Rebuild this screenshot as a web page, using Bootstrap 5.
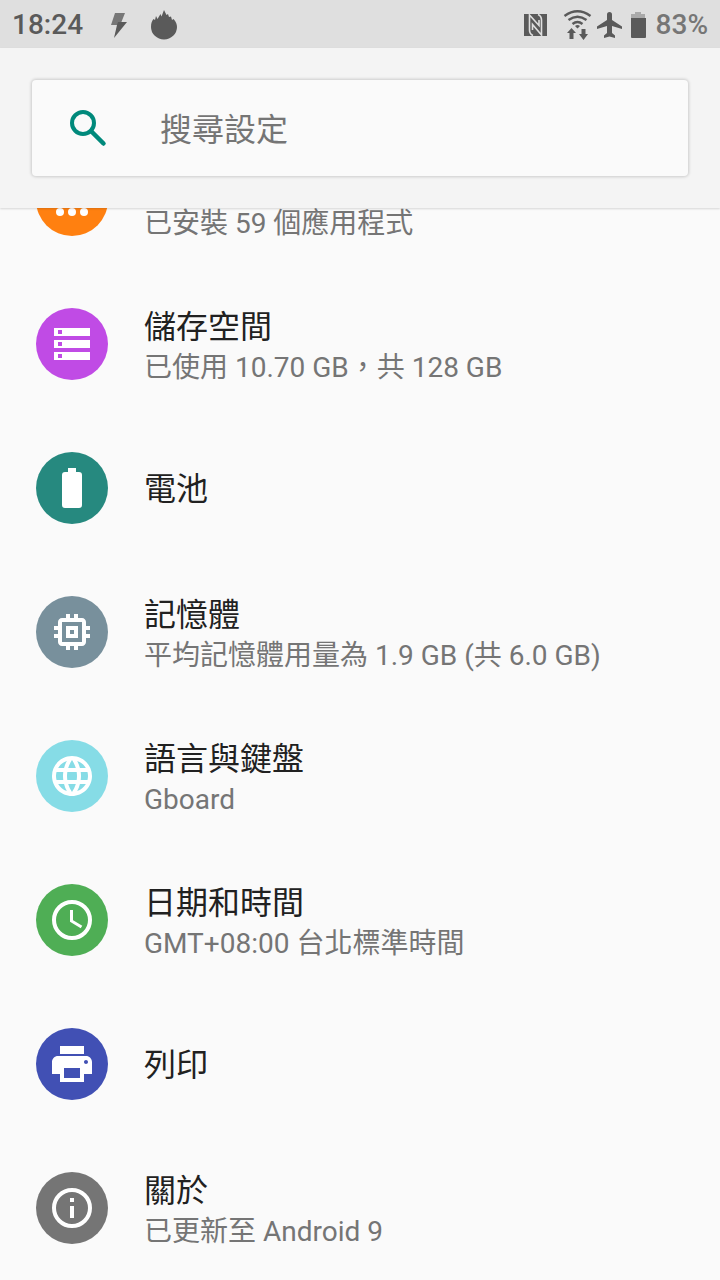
<!DOCTYPE html>
<html lang="zh-Hant">
<head>
<meta charset="utf-8">
<meta name="viewport" content="width=device-width, initial-scale=1">
<title>設定</title>
<link href="https://cdn.jsdelivr.net/npm/bootstrap@5.3.0/dist/css/bootstrap.min.css" rel="stylesheet">
<style>
  body { font-family: Roboto, "Noto Sans CJK TC", sans-serif; background: #fafafa; color: #212121; }
  svg { display: block; flex: none; }
  .status-bar { height: 48px; background: #dfdfdf; color: #5a5a5a; font-size: 28px; line-height: 48px; font-weight: 500; padding: 2px 12px 0; }
  .status-bar .level { color: #767676; }
  .status-icons { gap: 4px; margin-right: 9px; }
  .search-area { background: #f4f4f4; padding: 32px; box-shadow: 0 1px 2px rgba(0,0,0,.15); }
  .search-box { height: 96px; padding: 0 36px; background: #fafafa; border-radius: 4px; box-shadow: 0 0 3px 1px rgba(0,0,0,.17); }
  .search-box .form-control { font-size: 32px; line-height: 44px; color: #212121; padding: 4px 0 0; margin-left: 52px; }
  .search-box .form-control::placeholder { color: #757575; opacity: 1; }
  .setting { height: 144px; padding: 0 36px; gap: 36px; color: #212121; }
  .setting-text { padding-top: 2px; }
  .setting-title { font-size: 32px; line-height: 44px; padding-top: 2px; }
  .setting-note { font-size: 28px; line-height: 38px; color: #757575; }
  .setting-cut { height: 64px; padding-bottom: 33px; overflow: hidden; }
  .setting-cut svg { margin-bottom: 3px; }
  .setting-cut .setting-note { line-height: 30px; }
</style>
</head>
<body>
<header class="sticky-top">
  <div class="status-bar d-flex align-items-center">
    <span>18:24</span>
    <svg class="ms-4" width="24" height="32" viewBox="0 0 24 32" aria-hidden="true"><path fill="#777" d="M8 4h10l-4 10h3l-1 2H4z"/><path fill="#5a5a5a" d="M11 13h9L7 29l3-13z"/></svg>
    <svg class="ms-3" width="32" height="32" viewBox="0 0 32 32" aria-hidden="true"><path fill="#5a5a5a" d="M4 18C4 14 5 12 6.500 10l1.500 1 1-4 1.500 3 3-5 1 2.500L17 1l2.500 5 1.500-1 1 3 2-.5 1 3.500 1.500-1C29 13 30 15 30 18a13 12.500 0 0 1-26 0z"/></svg>
    <span class="status-icons d-flex align-items-center ms-auto">
      <svg width="24" height="24" viewBox="0 0 24 24" aria-hidden="true"><path fill="#5a5a5a" d="M0 1h23v22H0z"/><path fill="none" stroke="#dfdfdf" stroke-width="1.600" d="M9 22.500Q5.500 21 5.500 17V2L15 12.500V7M14 1.500Q17.500 3 17.500 7v15L8.500 11.500V17"/></svg>
      <svg class="ms-2" width="32" height="32" viewBox="-3 0 32 32" aria-hidden="true"><g fill="none" stroke="#5a5a5a" stroke-width="2.400"><path d="M1.500 7q13-9.500 26 0M5.500 11q9-6.500 18 0M9.500 15q5-4 10 0"/></g><path fill="#5a5a5a" d="M12 17q2.500-2 5 0l-2.500 2.500zM8.500 19l4.500 5h-2.500v6h-4v-6H4zM18.500 20h4v5H25l-4.500 6-4.500-6h2.500z"/></svg>
      <svg width="27" height="28" viewBox="0 0 27 28" aria-hidden="true"><path fill="#5a5a5a" d="M26 18v-2.500L16 9V3.500a2.500 2.500 0 0 0-5 0V9L1 15.500V18l10-3v7l-3 2.500V27l5.500-1.500L19 27v-2.500L16 22v-7z"/></svg>
      <svg class="ms-1" width="16" height="28" viewBox="1 0 16 28" aria-hidden="true"><path fill="#aaa" d="M5 1h6v2h4v5H1V3h4z"/><path fill="#5a5a5a" d="M1 7h15v19q0 1-1 1H2q-1 0-1-1z"/></svg>
    </span>
    <span class="level">83%</span>
  </div>
  <div class="search-area">
    <form class="search-box d-flex align-items-center" role="search">
      <svg width="40" height="40" viewBox="0 0 40 40" aria-hidden="true"><g fill="none" stroke="#00897b" stroke-width="4"><circle cx="15" cy="15" r="11"/><path d="M23 23l12.500 12.500" stroke-width="4.500" stroke-linecap="round"/></g></svg>
      <input class="form-control border-0 bg-transparent shadow-none" type="text" placeholder="搜尋設定" aria-label="搜尋設定">
    </form>
  </div>
</header>

<main>
  <nav>
    <a href="#apps" class="setting setting-cut d-flex align-items-end text-decoration-none">
      <svg width="72" height="72" viewBox="0 0 72 72" aria-hidden="true"><circle cx="36" cy="36" r="36" fill="#ff8010"/><g fill="#fff"><circle cx="24" cy="48" r="4"/><circle cx="36" cy="48" r="4"/><circle cx="48" cy="48" r="4"/></g></svg>
      <span class="setting-note">已安裝 59 個應用程式</span>
    </a>
    <a href="#storage" class="setting d-flex align-items-center text-decoration-none">
      <svg width="72" height="72" viewBox="0 0 72 72" aria-hidden="true"><circle cx="36" cy="36" r="36" fill="#c04be5"/><path fill="#fff" d="M18 20h36v8H18zM18 32h36v8H18zM18 44h36v8H18z"/><path fill="#c04be5" d="M22 22h4v4h-4zM22 34h4v4h-4zM22 46h4v4h-4z"/></svg>
      <span class="setting-text d-flex flex-column"><span class="setting-title">儲存空間</span><span class="setting-note">已使用 10.70 GB，共 128 GB</span></span>
    </a>
    <a href="#battery" class="setting d-flex align-items-center text-decoration-none">
      <svg width="72" height="72" viewBox="0 0 72 72" aria-hidden="true"><circle cx="36" cy="36" r="36" fill="#26897f"/><path fill="#fff" d="M32 16h8v4h3q3 0 3 3v30q0 3-3 3H29q-3 0-3-3V23q0-3 3-3h3z"/></svg>
      <span class="setting-title">電池</span>
    </a>
    <a href="#memory" class="setting d-flex align-items-center text-decoration-none">
      <svg width="72" height="72" viewBox="-6 -6 36 36" aria-hidden="true"><circle cx="12" cy="12" r="18" fill="#78909c"/><path fill="#fff" d="M15 9H9v6h6V9zm-2 4h-2v-2h2v2zm8-2V9h-2V7c0-1.100-.9-2-2-2h-2V3h-2v2h-2V3H9v2H7c-1.100 0-2 .9-2 2v2H3v2h2v2H3v2h2v2c0 1.100.9 2 2 2h2v2h2v-2h2v2h2v-2h2c1.100 0 2-.9 2-2v-2h2v-2h-2v-2h2zm-4 6H7V7h10v10z"/></svg>
      <span class="setting-text d-flex flex-column"><span class="setting-title">記憶體</span><span class="setting-note">平均記憶體用量為 1.9 GB (共 6.0 GB)</span></span>
    </a>
    <a href="#language" class="setting d-flex align-items-center text-decoration-none">
      <svg width="72" height="72" viewBox="-6 -6 36 36" aria-hidden="true"><circle cx="12" cy="12" r="18" fill="#86dce6"/><path fill="#fff" d="M11.990 2C6.470 2 2 6.480 2 12s4.470 10 9.990 10C17.520 22 22 17.520 22 12S17.520 2 11.990 2zm6.930 6h-2.950c-.32-1.250-.78-2.450-1.380-3.560 1.840.63 3.370 1.910 4.330 3.560zM12 4.040c.83 1.200 1.480 2.530 1.910 3.960h-3.820c.43-1.430 1.080-2.760 1.910-3.960zM4.260 14C4.100 13.360 4 12.690 4 12s.1-1.360.26-2h3.380c-.08.66-.14 1.320-.14 2s.06 1.340.14 2H4.260zm.82 2h2.950c.32 1.250.78 2.450 1.380 3.560-1.840-.63-3.370-1.900-4.330-3.560zm2.950-8H5.080c.96-1.660 2.490-2.930 4.330-3.560C8.810 5.550 8.350 6.750 8.030 8zM12 19.960c-.83-1.200-1.480-2.530-1.910-3.960h3.820c-.43 1.430-1.080 2.760-1.910 3.960zM14.340 14H9.660c-.09-.66-.16-1.320-.16-2s.07-1.350.16-2h4.680c.09.65.16 1.320.16 2s-.07 1.340-.16 2zm.25 5.560c.6-1.110 1.060-2.310 1.380-3.560h2.950c-.96 1.650-2.490 2.930-4.330 3.560zM16.360 14c.08-.66.14-1.320.14-2s-.06-1.340-.14-2h3.380c.16.64.26 1.310.26 2s-.1 1.360-.26 2h-3.380z"/></svg>
      <span class="setting-text d-flex flex-column"><span class="setting-title">語言與鍵盤</span><span class="setting-note">Gboard</span></span>
    </a>
    <a href="#date" class="setting d-flex align-items-center text-decoration-none">
      <svg width="72" height="72" viewBox="0 0 72 72" aria-hidden="true"><circle cx="36" cy="36" r="36" fill="#4fae55"/><circle cx="36" cy="36" r="18" fill="none" stroke="#fff" stroke-width="4"/><path fill="none" stroke="#fff" stroke-width="3" d="M35.500 26v11l10 6"/></svg>
      <span class="setting-text d-flex flex-column"><span class="setting-title">日期和時間</span><span class="setting-note">GMT+08:00 台北標準時間</span></span>
    </a>
    <a href="#print" class="setting d-flex align-items-center text-decoration-none">
      <svg width="72" height="72" viewBox="-6 -6 36 36" aria-hidden="true"><circle cx="12" cy="12" r="18" fill="#4150b4"/><path fill="#fff" d="M19 8H5c-1.660 0-3 1.340-3 3v6h4v4h12v-4h4v-6c0-1.660-1.340-3-3-3zm-3 11H8v-5h8v5zm3-7c-.55 0-1-.45-1-1s.45-1 1-1 1 .45 1 1-.45 1-1 1zm-1-9H6v4h12V3z"/></svg>
      <span class="setting-title">列印</span>
    </a>
    <a href="#about" class="setting d-flex align-items-center text-decoration-none">
      <svg width="72" height="72" viewBox="0 0 72 72" aria-hidden="true"><circle cx="36" cy="36" r="36" fill="#757575"/><circle cx="36" cy="36" r="18" fill="none" stroke="#fff" stroke-width="4"/><path fill="#fff" d="M34 26h4v4h-4zM34 34h4v12h-4z"/></svg>
      <span class="setting-text d-flex flex-column"><span class="setting-title">關於</span><span class="setting-note">已更新至 Android 9</span></span>
    </a>
  </nav>
</main>
<script src="https://cdn.jsdelivr.net/npm/bootstrap@5.3.0/dist/js/bootstrap.bundle.min.js"></script>
</body>
</html>
